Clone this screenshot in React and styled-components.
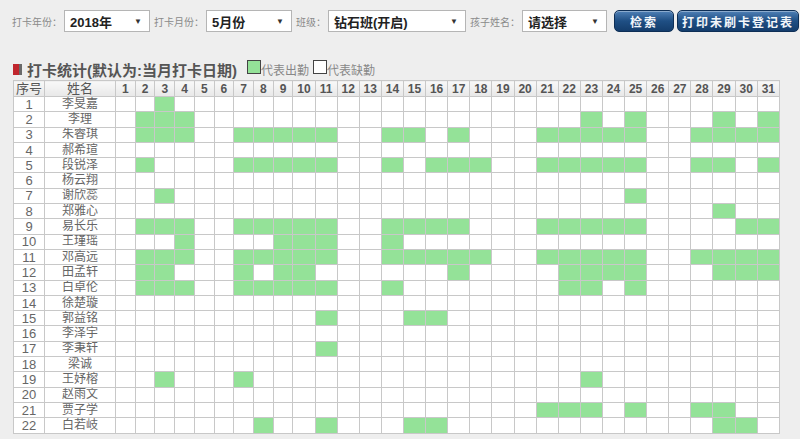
import React from 'react'
import styled, { createGlobalStyle } from 'styled-components'

const GlobalStyle = createGlobalStyle`
  html, body {
    margin: 0;
    padding: 0;
    background: #eeeeee;
    font-family: "Liberation Sans", "Noto Sans CJK SC", sans-serif;
  }
`

const students = [
  ['李旻嘉', [3]],
  ['李理', [2, 3, 4, 23, 25, 29, 31]],
  ['朱睿琪', [2, 3, 4, 7, 8, 9, 10, 11, 14, 15, 17, 21, 22, 23, 24, 25, 28, 29, 30, 31]],
  ['郝希瑄', []],
  ['段锐泽', [2, 7, 8, 9, 10, 11, 14, 16, 17, 18, 21, 22, 23, 24, 25, 28, 29, 31]],
  ['杨云翔', []],
  ['谢欣蕊', [3, 25]],
  ['郑雅心', [29]],
  ['易长乐', [2, 3, 4, 7, 8, 9, 10, 11, 14, 15, 16, 17, 21, 22, 23, 24, 25, 30, 31]],
  ['王瑾瑶', [4, 9, 10, 11, 14]],
  ['邓高远', [2, 3, 4, 7, 8, 9, 10, 11, 14, 15, 16, 17, 18, 21, 22, 23, 24, 25, 28, 29, 30, 31]],
  ['田孟轩', [2, 3, 7, 9, 10, 17, 22, 23, 24, 25, 29, 30, 31]],
  ['白卓伦', [2, 3, 4, 7, 8, 9, 10, 11, 14, 22, 23, 25]],
  ['徐楚璇', []],
  ['郭益铭', [11, 15, 16]],
  ['李泽宇', []],
  ['李秉轩', [11]],
  ['梁诚', []],
  ['王妤榕', [3, 7, 23]],
  ['赵雨文', []],
  ['贾子学', [21, 22, 23, 25, 28, 29]],
  ['白若岐', [8, 11, 15, 16, 29, 30]],
]

const days = Array.from({ length: 31 }, (_, i) => i + 1)

const filters = [
  { label: '打卡年份：', value: '2018年', width: 86 },
  { label: '打卡月份：', value: '5月份', width: 86 },
  { label: '班级：', value: '钻石班(开启)', width: 138 },
  { label: '孩子姓名：', value: '请选择', width: 85 },
]

function App() {
  return (
    <Page>
      <GlobalStyle />
      <Toolbar>
        {filters.map((f) => (
          <Field key={f.label}>
            <Label>{f.label}</Label>
            <FakeSelect $w={f.width}>
              <span>{f.value}</span>
              <Arrow>▼</Arrow>
            </FakeSelect>
          </Field>
        ))}
        <Button $w={60}>检索</Button>
        <Button $w={122}>打印未刷卡登记表</Button>
      </Toolbar>

      <TitleRow>
        <Marker />
        <Title>打卡统计(默认为:当月打卡日期)</Title>
        <Legend>
          <Swatch $on />
          <LegendText>代表出勤</LegendText>
          <Swatch />
          <LegendText>代表缺勤</LegendText>
        </Legend>
      </TitleRow>

      <Table>
        <colgroup>
          <col style={{ width: 31 }} />
          <col style={{ width: 71 }} />
          {days.map((d) => (
            <col key={d} style={{ width: d < 10 ? 19.7 : 22.1 }} />
          ))}
        </colgroup>
        <thead>
          <tr>
            <HeadCell>序号</HeadCell>
            <HeadCell>姓名</HeadCell>
            {days.map((d) => (
              <HeadCell key={d} $num>{d}</HeadCell>
            ))}
          </tr>
        </thead>
        <tbody>
          {students.map(([name, present], i) => (
            <tr key={name}>
              <Cell>{i + 1}</Cell>
              <Cell $name>{name}</Cell>
              {days.map((d) => (
                <Cell key={d} $on={present.includes(d)} />
              ))}
            </tr>
          ))}
        </tbody>
      </Table>
    </Page>
  )
}

export default App

const Page = styled.div`
  padding: 10px 0 0 13px;
  width: 787px;
  height: 429px;
  overflow: hidden;
`

const Toolbar = styled.div`
  display: flex;
  align-items: center;
  height: 22px;
  margin-left: -1px;
`

const Field = styled.div`
  display: flex;
  align-items: center;
  margin-right: 4px;
`

const Label = styled.span`
  font-size: 10px;
  color: #8a8a8a;
  margin-right: 2px;
  white-space: nowrap;
`

const FakeSelect = styled.div`
  box-sizing: border-box;
  width: ${(p) => p.$w}px;
  height: 22px;
  background: #fff;
  border: 1px solid #b5b5b5;
  display: flex;
  align-items: center;
  justify-content: space-between;
  padding: 0 7px 0 5px;
  font-size: 13px;
  font-weight: 600;
  color: #222;
  white-space: nowrap;
`

const Arrow = styled.span`
  font-size: 8px;
  color: #333;
`

const Button = styled.div`
  box-sizing: border-box;
  width: ${(p) => p.$w}px;
  height: 22px;
  margin-left: 3px;
  border-radius: 5px;
  border: 1px solid #0e2f56;
  background: linear-gradient(#4f80b6, #1f4f84 50%, #143d6c);
  box-shadow: inset 0 1px 0 rgba(255, 255, 255, 0.35);
  color: #f2f6fa;
  font-size: 12px;
  font-weight: 600;
  letter-spacing: 2px;
  display: flex;
  align-items: center;
  justify-content: center;
  white-space: nowrap;
`

const TitleRow = styled.div`
  display: flex;
  align-items: center;
  height: 20px;
  margin-top: 27px;
`

const Marker = styled.span`
  width: 6px;
  height: 11px;
  background: #c0262d;
  border-right: 3px solid #6a6a6a;
  margin-right: 5px;
`

const Title = styled.span`
  font-size: 15px;
  font-weight: 600;
  color: #555;
  white-space: nowrap;
`

const Legend = styled.div`
  display: flex;
  align-items: center;
  margin-left: 10px;
  margin-top: -4px;
`

const Swatch = styled.span`
  box-sizing: border-box;
  width: 14px;
  height: 14px;
  border: 1px solid #444;
  background: ${(p) => (p.$on ? '#94e298' : '#fff')};
`

const LegendText = styled.span`
  font-size: 12px;
  color: #888;
  margin-right: 4px;
  margin-top: 4px;
`

const Table = styled.table`
  border-collapse: collapse;
  table-layout: fixed;
  width: 767px;
  background: #fff;
  margin-top: 1px;

  tr {
    height: 15.3px;
  }
  thead tr {
    height: 16px;
  }
`

const HeadCell = styled.th`
  border: 1px solid #c8c8c8;
  background: linear-gradient(#f8f8f8, #e8e8e8);
  padding: 0;
  font-size: ${(p) => (p.$num ? '12px' : '13px')};
  font-weight: ${(p) => (p.$num ? 'bold' : 'normal')};
  color: #555;
  text-align: center;
  line-height: 14px;
  overflow: hidden;
`

const Cell = styled.td`
  border: 1px solid #c8c8c8;
  padding: 0;
  background: ${(p) => (p.$on ? '#94e298' : '#fff')};
  font-size: ${(p) => (p.$name ? '12px' : '13px')};
  color: #666;
  text-align: center;
  line-height: 13px;
  overflow: hidden;
  white-space: nowrap;
`
